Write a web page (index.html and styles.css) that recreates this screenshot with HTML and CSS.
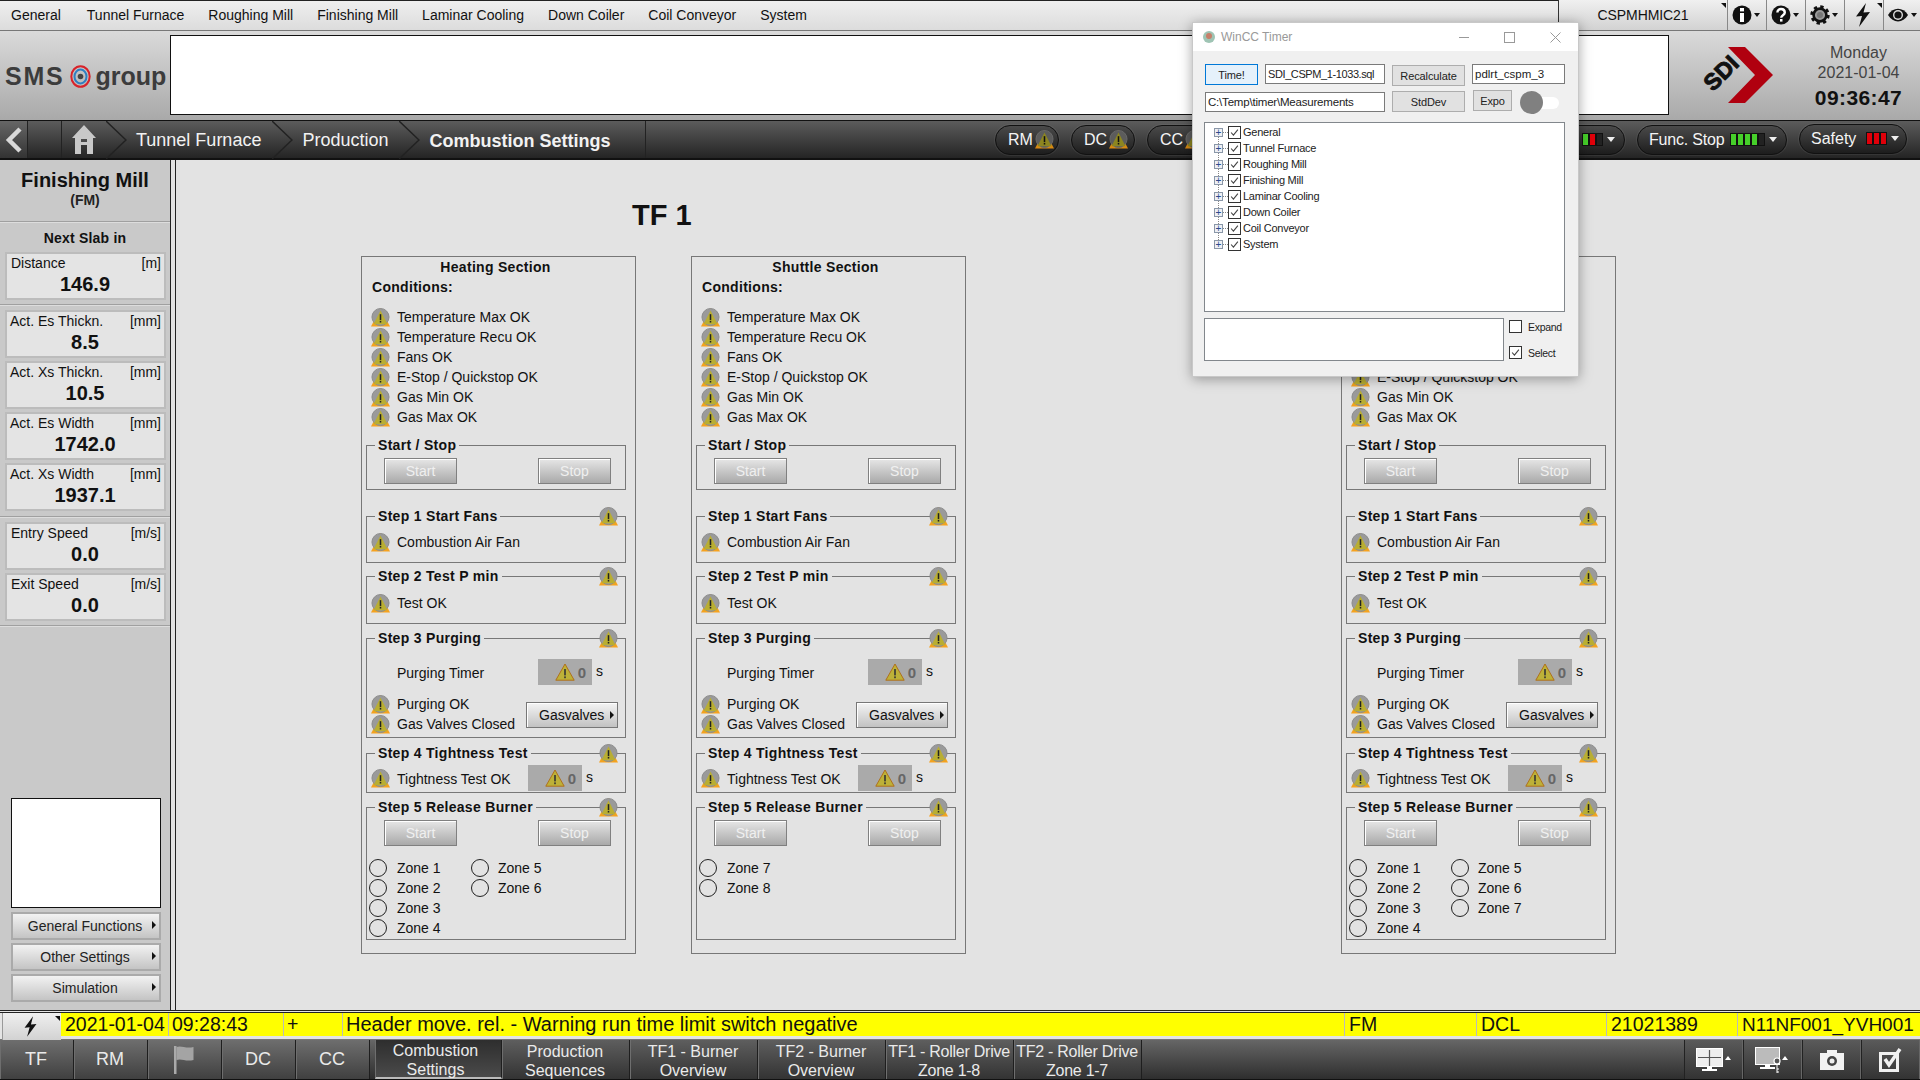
FILE: index.html
```html
<!DOCTYPE html>
<html lang="en">

<head>
    <meta charset="UTF-8">
    <title>Combustion Settings</title>
    <link rel="stylesheet" href="styles.css">
</head>

<body>
    <!-- shared icons -->
    <svg class="defs" xmlns="http://www.w3.org/2000/svg">
        <symbol id="warn" viewBox="0 0 20 20">
            <polygon points="10,0 20,19.5 0,19.5" fill="#f5a21e" />
            <circle cx="10" cy="9.5" r="9" fill="#9a9a9a" stroke="#8a8a8a" />
            <polygon points="10,2.5 17.4,17 2.6,17" fill="#b9ae32" />
            <rect x="9.2" y="6.5" width="1.6" height="6.2" fill="#222" />
            <rect x="9.2" y="13.6" width="1.6" height="1.7" fill="#222" />
        </symbol>
        <symbol id="warn-dim" viewBox="0 0 20 20">
            <polygon points="10,0 20,19.5 0,19.5" fill="#d98a12" />
            <circle cx="10" cy="9.5" r="9" fill="#5c5c5c" stroke="#6a6a6a" />
            <polygon points="10,2.5 17.4,17 2.6,17" fill="#8d8620" />
            <rect x="9.2" y="6.5" width="1.6" height="6.2" fill="#111" />
            <rect x="9.2" y="13.6" width="1.6" height="1.7" fill="#111" />
        </symbol>
        <symbol id="warn-flat" viewBox="0 0 20 18">
            <polygon points="10,1 19.2,17.2 0.8,17.2" fill="#bdb138" stroke="#b0701c" />
            <rect x="9.2" y="6" width="1.6" height="6.4" fill="#333" />
            <rect x="9.2" y="13.4" width="1.6" height="1.8" fill="#333" />
        </symbol>
        <symbol id="bolt" viewBox="0 0 20 24">
            <polygon points="13,0 3,13.5 9,13 6,24 17,9 10.5,9.5" fill="#111" />
        </symbol>
        <symbol id="tick" viewBox="0 0 13 13">
            <polyline points="2.5,6.5 5.2,9.5 10.5,3" fill="none" stroke="#444" stroke-width="1.3" />
        </symbol>
    </svg>

    <div class="menubar">
        <nav class="menu">
            <a>General</a>
            <a>Tunnel Furnace</a>
            <a>Roughing Mill</a>
            <a>Finishing Mill</a>
            <a>Laminar Cooling</a>
            <a>Down Coiler</a>
            <a>Coil Conveyor</a>
            <a>System</a>
        </nav>
        <div class="sysbox">
            <div class="syscell host tickmark">CSPMHMIC21</div>
            <div class="syscell">
                <svg width="20" height="20" viewBox="0 0 20 20">
                    <circle cx="10" cy="10" r="9.5" fill="#111" />
                    <rect x="8" y="3" width="4" height="3.4" fill="#fff" />
                    <rect x="8" y="8" width="4" height="9" fill="#fff" />
                </svg>
                <span class="mini-caret"></span>
            </div>
            <div class="syscell">
                <svg width="20" height="20" viewBox="0 0 20 20">
                    <circle cx="10" cy="10" r="9.5" fill="#111" />
                    <path d="M6.4 7.6c0-5 7.4-4.6 7.4 0 0 2.8-3.6 2.6-3.6 5.2" fill="none" stroke="#fff" stroke-width="2.4" />
                    <rect x="9" y="14" width="2.5" height="2.6" fill="#fff" />
                </svg>
                <span class="mini-caret"></span>
            </div>
            <div class="syscell">
                <svg width="20" height="20" viewBox="0 0 20 20">
                    <circle cx="10" cy="10" r="8" fill="none" stroke="#111" stroke-width="3.4" stroke-dasharray="3.2 3.08" />
                    <circle cx="10" cy="10" r="6.4" fill="#999" stroke="#111" stroke-width="2.6" />
                    <circle cx="10" cy="10" r="3" fill="#777" />
                </svg>
                <span class="mini-caret"></span>
            </div>
            <div class="syscell syscell-bolt tickmark">
                <svg width="20" height="24"><use href="#bolt" /></svg>
            </div>
            <div class="syscell syscell-eye">
                <svg width="22" height="16" viewBox="0 0 22 16">
                    <path d="M1 8c5-8.500 15-8.500 20 0-5 8.500-15 8.500-20 0z" fill="#111" />
                    <circle cx="11" cy="8" r="5" fill="#ddd" />
                    <circle cx="11" cy="8" r="3.600" fill="#111" />
                </svg>
                <span class="mini-caret"></span>
            </div>
        </div>
    </div>

    <header class="banner">
        <div class="logo">
            <span>SMS</span>
            <svg width="21" height="23" viewBox="0 0 21 23">
                <ellipse cx="10.500" cy="11.500" rx="9.200" ry="10.300" fill="none" stroke="#d8232a" stroke-width="2" />
                <ellipse cx="10.500" cy="11.500" rx="6" ry="7" fill="none" stroke="#2f7fc1" stroke-width="2" />
                <circle cx="10.500" cy="11.500" r="2.800" fill="#444" />
            </svg>
            <span class="logo-word">group</span>
        </div>
        <div class="banner-box"></div>
        <svg class="sdi" width="75" height="60" viewBox="0 0 75 60">
            <polygon points="28,2 45,2 73,30 45,58 28,58 55,30" fill="#b0000f" />
            <text x="21" y="36" transform="rotate(-45 21 28)" class="sdi-text" text-anchor="middle">SDI</text>
        </svg>
        <div class="clock">
            <div>Monday</div>
            <div>2021-01-04</div>
            <div class="clock-time">09:36:47</div>
        </div>
    </header>

    <div class="navbar">
        <div class="nav-back">
            <svg width="20" height="26" viewBox="0 0 20 26">
                <polyline points="16,2 5,13 16,24" fill="none" stroke="#d8d8d8" stroke-width="4.500" />
            </svg>
        </div>
        <div class="nav-blank"></div>
        <div class="nav-home">
            <svg width="26" height="32" viewBox="0 0 26 32">
                <path d="M13 1L1 14h3v16h6v-9h6v9h6V14h3z" fill="#c8c8c8" />
                <rect x="10" y="15" width="6" height="3" fill="#4a4a4a" />
            </svg>
        </div>
        <svg class="crumb-arrow" width="21" height="38" viewBox="0 0 21 38">
            <polyline points="0,0 20,19 0,38" fill="none" stroke="#222" stroke-width="1.500" />
        </svg>
        <span class="crumb">Tunnel Furnace</span>
        <svg class="crumb-arrow" width="21" height="38" viewBox="0 0 21 38">
            <polyline points="0,0 20,19 0,38" fill="none" stroke="#222" stroke-width="1.500" />
        </svg>
        <span class="crumb">Production</span>
        <svg class="crumb-arrow" width="21" height="38" viewBox="0 0 21 38">
            <polyline points="0,0 20,19 0,38" fill="none" stroke="#222" stroke-width="1.500" />
        </svg>
        <span class="crumb crumb-current">Combustion Settings</span>

        <div class="pills">
            <div class="pill pill-area">RM<svg width="19" height="19"><use href="#warn-dim" /></svg></div>
            <div class="pill pill-area">DC<svg width="19" height="19"><use href="#warn-dim" /></svg></div>
            <div class="pill pill-area">CC<svg width="19" height="19"><use href="#warn-dim" /></svg></div>
            <div class="pill pill-status">
                <span class="bars"><i class="on"></i><i class="bad"></i><i></i></span>
                <span class="caret"></span>
            </div>
            <div class="pill pill-func">
                <span>Func. Stop</span>
                <span class="bars"><i class="on"></i><i class="on"></i><i class="on"></i><i class="on"></i><i></i></span>
                <span class="caret"></span>
            </div>
            <div class="pill pill-safety">
                <span>Safety</span>
                <span class="bars"><i class="bad"></i><i class="bad"></i><i class="bad"></i></span>
                <span class="caret"></span>
            </div>
        </div>
    </div>

    <div class="content">
        <aside class="sidebar">
            <div class="side-head">
                <div class="side-title">Finishing Mill</div>
                <div class="side-sub">(FM)</div>
            </div>
            <div class="side-sec side-next">
                <div class="side-label">Next Slab in</div>
                <div class="card">
                    <div class="card-top"><span class="card-name">Distance</span><span>[m]</span></div>
                    <div class="card-val">146.9</div>
                </div>
            </div>
            <div class="side-sec">
                <div class="card">
                    <div class="card-top"><span>Act. Es Thickn.</span><span>[mm]</span></div>
                    <div class="card-val">8.5</div>
                </div>
                <div class="card">
                    <div class="card-top"><span>Act. Xs Thickn.</span><span>[mm]</span></div>
                    <div class="card-val">10.5</div>
                </div>
                <div class="card">
                    <div class="card-top"><span>Act. Es Width</span><span>[mm]</span></div>
                    <div class="card-val">1742.0</div>
                </div>
                <div class="card">
                    <div class="card-top"><span>Act. Xs Width</span><span>[mm]</span></div>
                    <div class="card-val">1937.1</div>
                </div>
            </div>
            <div class="side-sec">
                <div class="card">
                    <div class="card-top"><span class="card-name">Entry Speed</span><span>[m/s]</span></div>
                    <div class="card-val">0.0</div>
                </div>
                <div class="card">
                    <div class="card-top"><span class="card-name">Exit Speed</span><span>[m/s]</span></div>
                    <div class="card-val">0.0</div>
                </div>
            </div>
            <div class="side-bottom">
                <div class="side-white"></div>
                <button class="side-btn">General Functions<span class="arrow"></span></button>
                <button class="side-btn">Other Settings<span class="arrow"></span></button>
                <button class="side-btn">Simulation<span class="arrow"></span></button>
            </div>
        </aside>

        <main class="main">
            <h1 class="main-title">TF 1</h1>
            <div class="panels">
                <section class="panel">
                    <h2 class="panel-title">Heating Section</h2>
                    <div class="cond-title">Conditions:</div>
                    <div class="cond-list">
                        <div class="row"><svg class="warn"><use href="#warn" /></svg>Temperature Max OK</div>
                        <div class="row"><svg class="warn"><use href="#warn" /></svg>Temperature Recu OK</div>
                        <div class="row"><svg class="warn"><use href="#warn" /></svg>Fans OK</div>
                        <div class="row"><svg class="warn"><use href="#warn" /></svg>E-Stop / Quickstop OK</div>
                        <div class="row"><svg class="warn"><use href="#warn" /></svg>Gas Min OK</div>
                        <div class="row"><svg class="warn"><use href="#warn" /></svg>Gas Max OK</div>
                    </div>
                    <div class="group g-start">
                        <span class="group-title">Start / Stop</span>
                        <div class="btn-pair"><button class="btn-off">Start</button><button class="btn-off">Stop</button></div>
                    </div>
                    <div class="group g-step1">
                        <span class="group-title">Step 1 Start Fans</span>
                        <svg class="warn group-warn"><use href="#warn" /></svg>
                        <div class="row"><svg class="warn"><use href="#warn" /></svg>Combustion Air Fan</div>
                    </div>
                    <div class="group g-step2">
                        <span class="group-title">Step 2 Test P min</span>
                        <svg class="warn group-warn"><use href="#warn" /></svg>
                        <div class="row"><svg class="warn"><use href="#warn" /></svg>Test OK</div>
                    </div>
                    <div class="group g-step3">
                        <span class="group-title">Step 3 Purging</span>
                        <svg class="warn group-warn"><use href="#warn" /></svg>
                        <div class="timer-row">
                            <span class="timer-name">Purging Timer</span>
                            <div class="timer"><svg width="20" height="18"><use href="#warn-flat" /></svg><b>0</b></div>
                            <span class="unit">s</span>
                        </div>
                        <div class="purge-row">
                            <div>
                                <div class="row"><svg class="warn"><use href="#warn" /></svg>Purging OK</div>
                                <div class="row"><svg class="warn"><use href="#warn" /></svg>Gas Valves Closed</div>
                            </div>
                            <button class="btn-menu">Gasvalves<span class="arrow"></span></button>
                        </div>
                    </div>
                    <div class="group g-step4">
                        <span class="group-title">Step 4 Tightness Test</span>
                        <svg class="warn group-warn"><use href="#warn" /></svg>
                        <div class="tight-row">
                            <div class="row"><svg class="warn"><use href="#warn" /></svg>Tightness Test OK</div>
                            <div class="timer"><svg width="20" height="18"><use href="#warn-flat" /></svg><b>0</b></div>
                            <span class="unit">s</span>
                        </div>
                    </div>
                    <div class="group g-step5">
                        <span class="group-title">Step 5 Release Burner</span>
                        <svg class="warn group-warn"><use href="#warn" /></svg>
                        <div class="btn-pair"><button class="btn-off">Start</button><button class="btn-off">Stop</button></div>
                        <div class="zones">
                            <div class="zone"><i></i>Zone 1</div>
                            <div class="zone"><i></i>Zone 5</div>
                            <div class="zone"><i></i>Zone 2</div>
                            <div class="zone"><i></i>Zone 6</div>
                            <div class="zone"><i></i>Zone 3</div>
                            <div></div>
                            <div class="zone"><i></i>Zone 4</div>
                        </div>
                    </div>
                </section>

                <section class="panel">
                    <h2 class="panel-title">Shuttle Section</h2>
                    <div class="cond-title">Conditions:</div>
                    <div class="cond-list">
                        <div class="row"><svg class="warn"><use href="#warn" /></svg>Temperature Max OK</div>
                        <div class="row"><svg class="warn"><use href="#warn" /></svg>Temperature Recu OK</div>
                        <div class="row"><svg class="warn"><use href="#warn" /></svg>Fans OK</div>
                        <div class="row"><svg class="warn"><use href="#warn" /></svg>E-Stop / Quickstop OK</div>
                        <div class="row"><svg class="warn"><use href="#warn" /></svg>Gas Min OK</div>
                        <div class="row"><svg class="warn"><use href="#warn" /></svg>Gas Max OK</div>
                    </div>
                    <div class="group g-start">
                        <span class="group-title">Start / Stop</span>
                        <div class="btn-pair"><button class="btn-off">Start</button><button class="btn-off">Stop</button></div>
                    </div>
                    <div class="group g-step1">
                        <span class="group-title">Step 1 Start Fans</span>
                        <svg class="warn group-warn"><use href="#warn" /></svg>
                        <div class="row"><svg class="warn"><use href="#warn" /></svg>Combustion Air Fan</div>
                    </div>
                    <div class="group g-step2">
                        <span class="group-title">Step 2 Test P min</span>
                        <svg class="warn group-warn"><use href="#warn" /></svg>
                        <div class="row"><svg class="warn"><use href="#warn" /></svg>Test OK</div>
                    </div>
                    <div class="group g-step3">
                        <span class="group-title">Step 3 Purging</span>
                        <svg class="warn group-warn"><use href="#warn" /></svg>
                        <div class="timer-row">
                            <span class="timer-name">Purging Timer</span>
                            <div class="timer"><svg width="20" height="18"><use href="#warn-flat" /></svg><b>0</b></div>
                            <span class="unit">s</span>
                        </div>
                        <div class="purge-row">
                            <div>
                                <div class="row"><svg class="warn"><use href="#warn" /></svg>Purging OK</div>
                                <div class="row"><svg class="warn"><use href="#warn" /></svg>Gas Valves Closed</div>
                            </div>
                            <button class="btn-menu">Gasvalves<span class="arrow"></span></button>
                        </div>
                    </div>
                    <div class="group g-step4">
                        <span class="group-title">Step 4 Tightness Test</span>
                        <svg class="warn group-warn"><use href="#warn" /></svg>
                        <div class="tight-row">
                            <div class="row"><svg class="warn"><use href="#warn" /></svg>Tightness Test OK</div>
                            <div class="timer"><svg width="20" height="18"><use href="#warn-flat" /></svg><b>0</b></div>
                            <span class="unit">s</span>
                        </div>
                    </div>
                    <div class="group g-step5">
                        <span class="group-title">Step 5 Release Burner</span>
                        <svg class="warn group-warn"><use href="#warn" /></svg>
                        <div class="btn-pair"><button class="btn-off">Start</button><button class="btn-off">Stop</button></div>
                        <div class="zones">
                            <div class="zone"><i></i>Zone 7</div>
                            <div></div>
                            <div class="zone"><i></i>Zone 8</div>
                        </div>
                    </div>
                </section>

                <section class="panel panel-third">
                    <h2 class="panel-title">Soaking Section</h2>
                    <div class="cond-title">Conditions:</div>
                    <div class="cond-list">
                        <div class="row"><svg class="warn"><use href="#warn" /></svg>Temperature Max OK</div>
                        <div class="row"><svg class="warn"><use href="#warn" /></svg>Temperature Recu OK</div>
                        <div class="row"><svg class="warn"><use href="#warn" /></svg>Fans OK</div>
                        <div class="row"><svg class="warn"><use href="#warn" /></svg>E-Stop / Quickstop OK</div>
                        <div class="row"><svg class="warn"><use href="#warn" /></svg>Gas Min OK</div>
                        <div class="row"><svg class="warn"><use href="#warn" /></svg>Gas Max OK</div>
                    </div>
                    <div class="group g-start">
                        <span class="group-title">Start / Stop</span>
                        <div class="btn-pair"><button class="btn-off">Start</button><button class="btn-off">Stop</button></div>
                    </div>
                    <div class="group g-step1">
                        <span class="group-title">Step 1 Start Fans</span>
                        <svg class="warn group-warn"><use href="#warn" /></svg>
                        <div class="row"><svg class="warn"><use href="#warn" /></svg>Combustion Air Fan</div>
                    </div>
                    <div class="group g-step2">
                        <span class="group-title">Step 2 Test P min</span>
                        <svg class="warn group-warn"><use href="#warn" /></svg>
                        <div class="row"><svg class="warn"><use href="#warn" /></svg>Test OK</div>
                    </div>
                    <div class="group g-step3">
                        <span class="group-title">Step 3 Purging</span>
                        <svg class="warn group-warn"><use href="#warn" /></svg>
                        <div class="timer-row">
                            <span class="timer-name">Purging Timer</span>
                            <div class="timer"><svg width="20" height="18"><use href="#warn-flat" /></svg><b>0</b></div>
                            <span class="unit">s</span>
                        </div>
                        <div class="purge-row">
                            <div>
                                <div class="row"><svg class="warn"><use href="#warn" /></svg>Purging OK</div>
                                <div class="row"><svg class="warn"><use href="#warn" /></svg>Gas Valves Closed</div>
                            </div>
                            <button class="btn-menu">Gasvalves<span class="arrow"></span></button>
                        </div>
                    </div>
                    <div class="group g-step4">
                        <span class="group-title">Step 4 Tightness Test</span>
                        <svg class="warn group-warn"><use href="#warn" /></svg>
                        <div class="tight-row">
                            <div class="row"><svg class="warn"><use href="#warn" /></svg>Tightness Test OK</div>
                            <div class="timer"><svg width="20" height="18"><use href="#warn-flat" /></svg><b>0</b></div>
                            <span class="unit">s</span>
                        </div>
                    </div>
                    <div class="group g-step5">
                        <span class="group-title">Step 5 Release Burner</span>
                        <svg class="warn group-warn"><use href="#warn" /></svg>
                        <div class="btn-pair"><button class="btn-off">Start</button><button class="btn-off">Stop</button></div>
                        <div class="zones">
                            <div class="zone"><i></i>Zone 1</div>
                            <div class="zone"><i></i>Zone 5</div>
                            <div class="zone"><i></i>Zone 2</div>
                            <div class="zone"><i></i>Zone 6</div>
                            <div class="zone"><i></i>Zone 3</div>
                            <div class="zone"><i></i>Zone 7</div>
                            <div class="zone"><i></i>Zone 4</div>
                        </div>
                    </div>
                </section>
            </div>
        </main>
    </div>

    <div class="alarmbar">
        <div class="alarm-btn tickmark"><svg width="17" height="21"><use href="#bolt" /></svg></div>
        <div class="alarm-cells">
            <span>2021-01-04</span>
            <span class="alarm-tight">09:28:43</span>
            <span class="alarm-tight">+</span>
            <span class="alarm-msg alarm-tight">Header move. rel. - Warning run time limit switch negative</span>
            <span>FM</span>
            <span>DCL</span>
            <span>21021389</span>
            <span class="alarm-tag">N11NF001_YVH001</span>
        </div>
    </div>

    <div class="tabbar">
        <div class="tab tab-area">TF</div>
        <div class="tab tab-area">RM</div>
        <div class="tab tab-area">
            <svg width="20" height="28" viewBox="0 0 20 28">
                <rect x="0" y="0" width="2.500" height="28" fill="#aaa" />
                <path d="M2.500 1c5-2 9 2 17 0v13c-8 2-12-2-17 0z" fill="#a4a4a4" />
            </svg>
        </div>
        <div class="tab tab-area">DC</div>
        <div class="tab tab-area tab-last">CC</div>
        <div class="tab tab-page tab-active">Combustion<br>Settings</div>
        <div class="tab tab-page">Production<br>Sequences</div>
        <div class="tab tab-page">TF1 - Burner<br>Overview</div>
        <div class="tab tab-page">TF2 - Burner<br>Overview</div>
        <div class="tab tab-page tab-tight">TF1 - Roller Drive<br>Zone 1-8</div>
        <div class="tab tab-page tab-tight">TF2 - Roller Drive<br>Zone 1-7</div>
        <div class="tab-tools">
            <div class="tool">
                <svg width="36" height="24" viewBox="0 0 36 24">
                    <rect x="0.500" y="0.500" width="26" height="18" fill="#eee" stroke="#fff" />
                    <path d="M2 9.500h23M13.500 2v16" stroke="#555" stroke-width="1.200" />
                    <rect x="11" y="19" width="5" height="2" fill="#fff" />
                    <rect x="6" y="21" width="15" height="2" fill="#fff" />
                    <polygon points="32,8 35,12 29,12" fill="#fff" />
                </svg>
            </div>
            <div class="tool">
                <svg width="36" height="26" viewBox="0 0 36 26">
                    <rect x="0.500" y="0.500" width="24" height="17" fill="#bbb" stroke="#fff" />
                    <rect x="10" y="18" width="5" height="2" fill="#fff" />
                    <rect x="5" y="20" width="15" height="2" fill="#fff" />
                    <circle cx="22" cy="14" r="3" fill="#555" stroke="#fff" stroke-width="1.200" />
                    <path d="M22 17v9M22 22h2M22 25h2" stroke="#fff" stroke-width="1" />
                    <polygon points="30,9 33,13 27,13" fill="#fff" />
                </svg>
            </div>
            <div class="tool">
                <svg width="24" height="20" viewBox="0 0 24 20">
                    <rect x="0" y="3" width="24" height="17" fill="#f2f2f2" />
                    <rect x="7" y="0" width="10" height="4" fill="#f2f2f2" />
                    <circle cx="12" cy="11" r="5" fill="#444" />
                    <circle cx="12" cy="11" r="2.500" fill="#eee" />
                </svg>
            </div>
            <div class="tool">
                <svg width="24" height="25" viewBox="0 0 24 25">
                    <rect x="1.500" y="6.500" width="17" height="17" fill="none" stroke="#f0f0f0" stroke-width="3" />
                    <polyline points="6,12 10,18 21,2" fill="none" stroke="#f0f0f0" stroke-width="3.500" />
                </svg>
            </div>
        </div>
    </div>

    <!-- floating timer tool, sits on top of the HMI -->
    <div class="wnd">
        <div class="wnd-title">
            <svg width="14" height="14" viewBox="0 0 14 14">
                <circle cx="7" cy="7" r="6" fill="#9fc4b4" />
                <circle cx="7" cy="6" r="3" fill="#c77f6a" />
            </svg>
            <span class="wnd-name">WinCC Timer</span>
            <span class="wnd-ctl wnd-min"></span>
            <span class="wnd-ctl wnd-max"></span>
            <svg class="wnd-close" width="11" height="11" viewBox="0 0 11 11">
                <path d="M0.500 0.500l10 10M10.500 0.500l-10 10" stroke="#999" />
            </svg>
        </div>
        <div class="wnd-row wnd-row1">
            <button class="wbtn wbtn-time">Time!</button>
            <div class="wfield wf-sql">SDI_CSPM_1-1033.sql</div>
            <button class="wbtn wbtn-calc">Recalculate</button>
            <div class="wfield wf-db">pdlrt_cspm_3</div>
        </div>
        <div class="wnd-row wnd-row2">
            <div class="wfield wf-path">C:\Temp\timer\Measurements</div>
            <button class="wbtn wbtn-calc">StdDev</button>
            <button class="wbtn wbtn-expo">Expo</button>
            <div class="toggle"><i></i></div>
        </div>
        <div class="tree">
            <div class="tree-row"><span class="plus">+</span><span class="dots"></span><span class="chk"><svg width="11" height="11"><use href="#tick" /></svg></span>General</div>
            <div class="tree-row"><span class="plus">+</span><span class="dots"></span><span class="chk"><svg width="11" height="11"><use href="#tick" /></svg></span>Tunnel Furnace</div>
            <div class="tree-row"><span class="plus">+</span><span class="dots"></span><span class="chk"><svg width="11" height="11"><use href="#tick" /></svg></span>Roughing Mill</div>
            <div class="tree-row"><span class="plus">+</span><span class="dots"></span><span class="chk"><svg width="11" height="11"><use href="#tick" /></svg></span>Finishing Mill</div>
            <div class="tree-row"><span class="plus">+</span><span class="dots"></span><span class="chk"><svg width="11" height="11"><use href="#tick" /></svg></span>Laminar Cooling</div>
            <div class="tree-row"><span class="plus">+</span><span class="dots"></span><span class="chk"><svg width="11" height="11"><use href="#tick" /></svg></span>Down Coiler</div>
            <div class="tree-row"><span class="plus">+</span><span class="dots"></span><span class="chk"><svg width="11" height="11"><use href="#tick" /></svg></span>Coil Conveyor</div>
            <div class="tree-row tree-last"><span class="plus">+</span><span class="dots"></span><span class="chk"><svg width="11" height="11"><use href="#tick" /></svg></span>System</div>
        </div>
        <div class="wnd-bottom">
            <div class="wnd-log"></div>
            <div class="wnd-opts">
                <div class="wopt"><span class="chk"></span>Expand</div>
                <div class="wopt"><span class="chk"><svg width="11" height="11"><use href="#tick" /></svg></span>Select</div>
            </div>
        </div>
    </div>
</body>

</html>
```

FILE: styles.css
```css
* {
    box-sizing: border-box;
}

html,
body {
    margin: 0;
    padding: 0;
}

body {
    position: relative;
    width: 1920px;
    height: 1080px;
    overflow: hidden;
    display: flex;
    flex-direction: column;
    font-family: "Liberation Sans", Arial, sans-serif;
    font-size: 14px;
    color: #111;
    background: #e3e3e3;
}

.defs {
    position: absolute;
    width: 0;
    height: 0;
}

button {
    font-family: inherit;
    padding: 0;
    cursor: default;
}

/* top menu */
.menubar {
    height: 31px;
    flex: none;
    display: flex;
    justify-content: space-between;
    border-top: 1px solid #222;
    border-bottom: 1px solid #777;
    background: linear-gradient(#efefef, #dcdcdc);
}

.menu {
    display: flex;
    align-items: center;
    padding-left: 11px;
    gap: 24px;
    padding-bottom: 1px;
}

.menu a:first-child {
    margin-right: 2px;
}

.sysbox {
    display: flex;
    width: 362px;
    border-left: 1px solid #333;
    margin-top: -1px;
}

.syscell {
    position: relative;
    width: 39px;
    display: flex;
    align-items: center;
    padding-left: 4px;
    gap: 2px;
    border-left: 1px solid #888;
    background: linear-gradient(#f0f0f0, #d2d2d2);
}

.syscell.host {
    width: 168px;
    justify-content: center;
    border-left: none;
    padding-left: 0;
    letter-spacing: -0.1px;
}

.syscell-bolt {
    padding-left: 8px;
}

.syscell-eye {
    width: 37px;
    padding-left: 3px;
}

.tickmark::after {
    content: "";
    position: absolute;
    top: 3px;
    right: 1px;
    border-top: 5px solid #111;
    border-left: 5px solid transparent;
}

.mini-caret {
    border-top: 4px solid #111;
    border-left: 3px solid transparent;
    border-right: 3px solid transparent;
}

/* logo row */
.banner {
    height: 89px;
    flex: none;
    display: flex;
    background: linear-gradient(#dadada, #a9a9a9);
}

.logo {
    width: 170px;
    display: flex;
    align-items: center;
    gap: 5px;
    padding-left: 5px;
    padding-top: 1px;
    font-size: 25px;
    font-weight: bold;
    letter-spacing: 1.8px;
    color: #3c3c3c;
}

.logo-word {
    letter-spacing: 0;
}

.banner-box {
    width: 1499px;
    height: 80px;
    margin-top: 4px;
    background: #fff;
    border: 1px solid #111;
}

.sdi {
    margin: 14px 0 0 31px;
    overflow: visible;
}

.sdi-text {
    font-family: "Liberation Sans", Arial, sans-serif;
    font-size: 23px;
    font-weight: bold;
    fill: #111;
    stroke: #111;
    stroke-width: 1px;
}

.clock {
    flex: 1;
    padding: 12px 0 0 22px;
    text-align: center;
    font-size: 16px;
    line-height: 20px;
    color: #444;
}

.clock-time {
    font-size: 21px;
    font-weight: bold;
    line-height: 30px;
    letter-spacing: 0.4px;
    color: #111;
}

/* breadcrumb bar */
.navbar {
    height: 40px;
    flex: none;
    display: flex;
    align-items: center;
    color: #f2f2f2;
    font-size: 18px;
    border-top: 1px solid #111;
    border-bottom: 2px solid #111;
    background: linear-gradient(#5c5c5c, #242424);
}

.nav-back {
    width: 28px;
    height: 100%;
    display: flex;
    align-items: center;
    justify-content: center;
    background: linear-gradient(#666, #333);
    border-right: 1px solid #222;
}

.nav-blank {
    width: 34px;
    height: 100%;
    border-right: 1px solid #222;
}

.nav-home {
    width: 44px;
    height: 100%;
    display: flex;
    align-items: center;
    padding-left: 9px;
}

.crumb-arrow {
    flex: none;
    margin-right: 9px;
}

.crumb {
    margin-right: 11px;
    padding-top: 2px;
}

.crumb-current {
    font-weight: bold;
    height: 100%;
    line-height: 36px;
    width: 217px;
    margin-right: 0;
    border-right: 1px solid #222;
}

.pills {
    width: 912px;
    margin-left: auto;
    margin-right: 13px;
    display: flex;
    gap: 12px;
}

.pill {
    height: 30px;
    display: flex;
    align-items: center;
    padding-left: 12px;
    font-size: 16px;
    color: #f4f4f4;
    border: 1px solid #111;
    border-radius: 15px;
    background: linear-gradient(#4a4a4a, #1d1d1d);
    box-shadow: 0 0 0 1px rgba(255, 255, 255, 0.06);
}

.pill-area {
    width: 64px;
    gap: 2px;
}

.pill-status {
    width: 100px;
    margin-left: auto;
    justify-content: flex-end;
    padding-right: 9px;
}

.pill-func {
    width: 150px;
    padding-left: 11px;
    letter-spacing: -0.2px;
}

.pill-safety {
    width: 108px;
    margin-top: -1px;
    padding-left: 11px;
}

.bars {
    display: flex;
    margin-left: 6px;
}

.pill-safety .bars {
    margin-left: 10px;
}

.bars i {
    width: 7px;
    height: 13px;
    background: #222;
    border: 1px solid #111;
}

.bars i.on {
    background: #46d02a;
}

.bars i.bad {
    background: #e0000a;
}

.caret {
    margin-left: 4px;
    border-top: 5px solid #eee;
    border-left: 4px solid transparent;
    border-right: 4px solid transparent;
}

/* middle */
.content {
    flex: 1;
    min-height: 0;
    display: flex;
}

.sidebar {
    width: 171px;
    flex: none;
    display: flex;
    flex-direction: column;
    border-right: 1px solid #222;
    background: #c9c9c9;
}

.side-head {
    height: 62px;
    padding-top: 8px;
    text-align: center;
    border-bottom: 1px solid #a0a0a0;
    box-shadow: 0 1px 0 #ddd;
}

.side-title {
    font-size: 20px;
    font-weight: bold;
    line-height: 24px;
}

.side-sub {
    font-size: 14px;
    line-height: 16px;
    font-weight: bold;
    color: #222;
}

.side-sec {
    padding: 5px 0 5px 5px;
    display: flex;
    flex-direction: column;
    gap: 3px;
    border-bottom: 1px solid #a0a0a0;
    box-shadow: 0 1px 0 #ddd;
}

.side-next {
    padding-top: 6px;
    padding-bottom: 4px;
    gap: 4px;
}

.side-sec:nth-child(4) {
    padding-bottom: 4px;
}

.side-label {
    text-align: center;
    font-weight: bold;
    line-height: 20px;
    letter-spacing: 0.2px;
    padding-right: 5px;
}

.card {
    width: 161px;
    height: 48px;
    padding-top: 1px;
    background: #e4e4e4;
    border: 2px solid #bcbcbc;
}

.card-top {
    display: flex;
    justify-content: space-between;
    padding: 0 3px 0 3px;
    line-height: 16px;
}

.card-name {
    padding-left: 1px;
}

.card-val {
    padding-top: 1px;
    padding-right: 1px;
    text-align: center;
    font-size: 20px;
    font-weight: bold;
    line-height: 24px;
}

.side-bottom {
    margin-top: auto;
    padding: 0 0 8px 11px;
    display: flex;
    flex-direction: column;
}

.side-white {
    width: 150px;
    height: 110px;
    background: #fff;
    border: 1px solid #111;
    margin-bottom: 4px;
}

.side-btn {
    position: relative;
    width: 150px;
    height: 28px;
    margin-bottom: 3px;
    padding-right: 2px;
    font-size: 14px;
    color: #222;
    border: 2px solid #aaa;
    background: linear-gradient(#f2f2f2, #c4c4c4);
}

.side-btn:last-child {
    margin-bottom: 0;
}

.side-btn .arrow {
    position: absolute;
    right: 3px;
    top: 7px;
}

.arrow {
    display: inline-block;
    border-left: 4px solid #111;
    border-top: 4px solid transparent;
    border-bottom: 4px solid transparent;
}

.main {
    flex: 1;
    margin-left: 4px;
    border-left: 1px solid #222;
    background: #e3e3e3;
}

.main-title {
    margin: 38px 0 24px 456px;
    font-size: 29px;
    line-height: 34px;
    font-weight: bold;
    color: #111;
}

.panels {
    display: flex;
    padding-left: 185px;
    gap: 55px;
}

.panel {
    width: 275px;
    height: 698px;
    padding: 0 4px;
    border: 1px solid #777;
}

.panel-third {
    margin-left: 320px;
}

.panel-title {
    margin: 0;
    padding-right: 6px;
    text-align: center;
    font-size: 14px;
    line-height: 20px;
    letter-spacing: 0.3px;
    font-weight: bold;
}

.cond-title {
    font-weight: bold;
    line-height: 20px;
    letter-spacing: 0.3px;
    padding-left: 6px;
}

.cond-list {
    margin-top: 10px;
}

.row {
    height: 20px;
    display: flex;
    align-items: center;
    white-space: nowrap;
}

.warn {
    width: 19px;
    height: 19px;
    flex: none;
    margin: 0 7px 0 5px;
}

.group {
    position: relative;
    width: 260px;
    border: 1px solid #777;
}

.group .warn {
    margin-left: 4px;
}

.group-title {
    display: block;
    width: fit-content;
    margin: -9px 0 0 8px;
    padding: 0 3px;
    font-weight: bold;
    line-height: 16px;
    letter-spacing: 0.3px;
    background: #e3e3e3;
}

.group .group-warn {
    position: absolute;
    top: -10px;
    right: 7px;
    margin: 0;
}

.g-start {
    height: 45px;
    margin-top: 18px;
}

.g-step1 {
    height: 47px;
    margin-top: 26px;
}

.g-step2 {
    height: 48px;
    margin-top: 13px;
}

.g-step3 {
    height: 100px;
    margin-top: 14px;
}

.g-step4 {
    height: 40px;
    margin-top: 15px;
}

.g-step5 {
    height: 133px;
    margin-top: 14px;
}

.g-step1 .row {
    margin-top: 8px;
}

.g-step2 .row {
    margin-top: 9px;
}

.btn-pair {
    display: flex;
    justify-content: space-between;
    padding: 5px 14px 0 17px;
}

.btn-off {
    width: 73px;
    height: 26px;
    font-size: 14px;
    color: #f0f0f0;
    border: 1px solid #808080;
    background: linear-gradient(#e6e6e6, #a9a9a9);
    box-shadow: inset 1px 1px 0 #fff;
}

.timer-row {
    display: flex;
    margin-top: 13px;
    height: 26px;
    padding-left: 30px;
    align-items: center;
}

.timer-name {
    width: 141px;
    padding-top: 2px;
}

.timer {
    width: 54px;
    height: 26px;
    display: flex;
    align-items: center;
    justify-content: flex-end;
    gap: 3px;
    padding-right: 6px;
    background: #aaa;
}

.timer b {
    font-size: 15px;
    color: #666;
}

.unit {
    margin: -3px 0 0 4px;
}

.purge-row {
    display: flex;
    justify-content: space-between;
    align-items: center;
    padding-right: 7px;
    margin-top: 9px;
}

.btn-menu {
    position: relative;
    width: 92px;
    height: 26px;
    margin-top: 2px;
    padding-left: 12px;
    text-align: left;
    font-size: 14px;
    color: #111;
    border: 1px solid #777;
    background: linear-gradient(#f4f4f4, #c2c2c2);
    box-shadow: inset 1px 1px 0 #fff;
}

.btn-menu .arrow {
    position: absolute;
    right: 3px;
    top: 8px;
}

.tight-row {
    display: flex;
    align-items: center;
    margin-top: 4px;
}

.tight-row .row {
    width: 161px;
    padding-top: 1px;
}

.zones {
    display: grid;
    grid-template-columns: 102px 1fr;
    grid-auto-rows: 20px;
    margin-top: 12px;
}

.zone {
    display: flex;
    align-items: center;
    padding-left: 2px;
}

.zone i {
    width: 18px;
    height: 18px;
    margin-right: 10px;
    border: 1.5px solid #222;
    border-radius: 50%;
}

.zone:nth-child(even) i {
    margin-right: 9px;
}

/* alarm line */
.alarmbar {
    height: 30px;
    flex: none;
    display: flex;
    border-top: 3px double #222;
    border-bottom: 1px solid #777;
    background: #e4e4e4;
}

.alarm-btn {
    position: relative;
    width: 59px;
    height: 27px;
    margin-left: 2px;
    display: flex;
    align-items: center;
    justify-content: center;
    padding-right: 4px;
    border-left: 1px solid #999;
    background: linear-gradient(#efefef, #d2d2d2);
}

.alarm-cells {
    flex: 1;
    height: 23px;
    display: grid;
    grid-template-columns: 108px 115px 59px 1002px 132px 130px 131px 1fr;
    background: #ff0;
    font-size: 19.5px;
    line-height: 23px;
    color: #111;
}

.alarm-cells span {
    padding-left: 4px;
    border-right: 1px solid #bbb;
    white-space: nowrap;
    overflow: hidden;
}

.alarm-cells .alarm-tight {
    padding-left: 3px;
}

.alarm-cells .alarm-msg {
    font-size: 20px;
}

.alarm-cells .alarm-tag {
    font-size: 19px;
    border-right: none;
}

/* bottom tabs */
.tabbar {
    height: 40px;
    flex: none;
    display: flex;
    background: linear-gradient(#666, #2e2e2e);
    border-bottom: 1px solid #111;
}

.tab {
    display: flex;
    align-items: center;
    justify-content: center;
    text-align: center;
    padding-right: 2px;
    color: #eaeaea;
    border-right: 1px solid #1e1e1e;
    border-left: 1px solid #6e6e6e;
}

.tab-area {
    width: 74px;
    font-size: 18px;
    background: linear-gradient(#6e6e6e, #404040);
}

.tab-last {
    margin-right: 5px;
}

.tab-page {
    width: 128px;
    padding-top: 2px;
    font-size: 16px;
    line-height: 19px;
    white-space: nowrap;
    background: linear-gradient(#5e5e5e, #333);
}

.tab-tight {
    letter-spacing: -0.25px;
}

.tab-active {
    width: 127px;
    padding-right: 6px;
    background: linear-gradient(#2e2e2e, #4a4a4a);
    border-bottom: 2px solid #bbb;
}

.tab-tools {
    margin-left: auto;
    display: flex;
}

.tool {
    width: 59px;
    display: flex;
    align-items: center;
    justify-content: center;
    border-left: 1px solid #222;
    border-right: 1px solid #666;
    background: linear-gradient(#5a5a5a, #333);
}

/* WinCC timer window */
.wnd {
    position: absolute;
    left: 1192px;
    top: 22px;
    width: 387px;
    height: 355px;
    font-size: 11px;
    color: #222;
    background: #f0f0f0;
    border: 1px solid #c8c8c8;
    box-shadow: 0 2px 12px rgba(0, 0, 0, 0.35);
}

.wnd-title {
    height: 28px;
    display: flex;
    align-items: center;
    padding-left: 9px;
    background: #fff;
    color: #999;
    font-size: 12px;
}

.wnd-name {
    margin-left: 5px;
}

.wnd-ctl {
    display: block;
}

.wnd-min {
    width: 10px;
    height: 1px;
    margin-left: 167px;
    background: #999;
}

.wnd-max {
    width: 11px;
    height: 11px;
    margin-left: 35px;
    border: 1px solid #999;
}

.wnd-close {
    margin-left: 35px;
}

.wnd-row {
    display: flex;
    align-items: flex-start;
    padding-left: 12px;
    gap: 7px;
}

.wnd-row1 {
    margin-top: 13px;
    height: 22px;
}

.wnd-row2 {
    margin-top: 5px;
    height: 25px;
}

.wfield {
    height: 20px;
    padding-left: 2px;
    line-height: 18px;
    font-size: 11.5px;
    letter-spacing: -0.2px;
    white-space: nowrap;
    overflow: hidden;
    background: #fff;
    border: 1px solid #7a7a7a;
}

.wf-sql {
    width: 120px;
    font-size: 11px;
    letter-spacing: -0.4px;
}

.wf-db {
    width: 93px;
    letter-spacing: 0;
}

.wf-path {
    width: 180px;
    margin-top: 1px;
}

.wbtn {
    height: 21px;
    font-size: 11px;
    letter-spacing: -0.1px;
    color: #222;
    background: #e1e1e1;
    border: 1px solid #adadad;
}

.wbtn-time {
    width: 53px;
    background: #e5f1fb;
    border-color: #0078d7;
}

.wbtn-calc {
    width: 73px;
    margin-top: 1px;
}

.wnd-row2 .wbtn-calc {
    margin-top: 0;
}

.wbtn-expo {
    width: 39px;
    margin: -1px 0 0 1px;
}

.toggle {
    position: relative;
    width: 39px;
    height: 12px;
    margin: 6px 0 0 1px;
    border-radius: 6px;
    background: #fff;
}

.toggle i {
    position: absolute;
    left: 0;
    top: -6px;
    width: 23px;
    height: 23px;
    border-radius: 50%;
    background: #808080;
}

.tree {
    width: 361px;
    height: 190px;
    margin: 6px 0 0 11px;
    padding: 1px 0 0 9px;
    background: #fff;
    border: 1px solid #82878c;
}

.tree-row {
    position: relative;
    height: 16px;
    display: flex;
    align-items: center;
    letter-spacing: -0.25px;
    white-space: nowrap;
}

.tree-row::before {
    content: "";
    position: absolute;
    left: 4px;
    top: 8px;
    height: 16px;
    border-left: 1px dotted #888;
}

.tree-last::before {
    display: none;
}

.plus {
    position: relative;
    width: 9px;
    height: 9px;
    font-size: 10px;
    line-height: 7px;
    text-align: center;
    letter-spacing: 0;
    color: #2b4a8c;
    background: #eef0f4;
    border: 1px solid #8a97a8;
}

.dots {
    width: 5px;
    border-top: 1px dotted #888;
}

.chk {
    width: 13px;
    height: 13px;
    margin-right: 2px;
    flex: none;
    display: flex;
    align-items: center;
    justify-content: center;
    background: #fff;
    border: 1px solid #333;
}

.wnd-bottom {
    display: flex;
    padding: 6px 0 0 11px;
}

.wnd-log {
    width: 300px;
    height: 43px;
    background: #fff;
    border: 1px solid #82878c;
}

.wnd-opts {
    margin-left: 5px;
    display: flex;
    flex-direction: column;
    gap: 13px;
    padding-top: 2px;
}

.wopt {
    display: flex;
    align-items: center;
    height: 13px;
    letter-spacing: -0.3px;
    font-size: 10.5px;
}

.wopt .chk {
    margin-right: 6px;
}
```
